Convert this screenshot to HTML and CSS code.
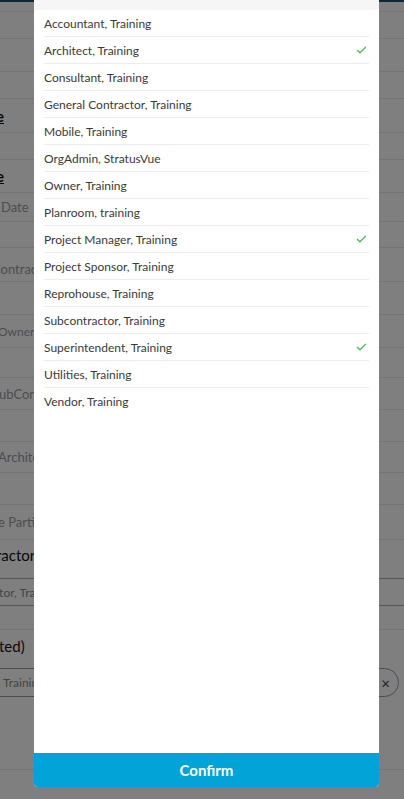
FILE: index.html
```html
<!DOCTYPE html>
<html lang="en">
<head>
<meta charset="utf-8">
<title>Select Participants</title>
<link rel="stylesheet" href="styles.css">
</head>
<body>
<div class="page">
  <div class="topbar"></div>
  <div class="r"></div>
  <div class="r"></div>
  <div class="r"></div>
  <div class="r"></div>
  <div class="r"><div class="cell"><span class="head">e</span></div></div>
  <div class="r"></div>
  <div class="r"><div class="cell"><span class="head">e</span></div></div>
  <div class="r"><div class="cell"><span class="lbl l-date">Date</span></div></div>
  <div class="r"></div>
  <div class="r low"><div class="cell"><span class="lbl l-con">Contractor</span></div></div>
  <div class="r"></div>
  <div class="r"><div class="cell"><span class="lbl l-own">(Owner)</span></div></div>
  <div class="r"></div>
  <div class="r"><div class="cell"><span class="lbl l-sub">SubContractor</span></div></div>
  <div class="r"></div>
  <div class="r"><div class="cell"><span class="lbl l-arc">Architect</span></div></div>
  <div class="r"></div>
  <div class="r"><div class="cell"><span class="lbl l-par">e Parties</span></div></div>
  <div class="r nb"><div class="cell"><span class="strong l-rac">Contractor</span></div></div>
  <div class="r nb"></div>
  <div class="r box"><div class="cell"><span class="small l-ctor">Subcontractor, Training</span></div></div>
  <div class="r"></div>
  <div class="r nb"><div class="cell"><span class="strong l-ted">ted)</span></div></div>
  <div class="r nb"></div>
  <div class="r nb"><div class="chip"><div class="cell"><span class="small l-tr">Training</span></div><span class="x">×</span></div></div>
  <div class="r"></div>
  <div class="r nb"></div>
</div>
<div class="overlay"></div>
<div class="modal">
  <div class="mhead"></div>
  <ul class="list">
    <li class="item">Accountant, Training</li>
    <li class="item">Architect, Training<svg class="check" viewBox="0 0 12 9"><path d="M1 4.6 L4.2 7.6 L11 1"/></svg></li>
    <li class="item">Consultant, Training</li>
    <li class="item">General Contractor, Training</li>
    <li class="item">Mobile, Training</li>
    <li class="item">OrgAdmin, StratusVue</li>
    <li class="item">Owner, Training</li>
    <li class="item">Planroom, training</li>
    <li class="item">Project Manager, Training<svg class="check" viewBox="0 0 12 9"><path d="M1 4.6 L4.2 7.6 L11 1"/></svg></li>
    <li class="item">Project Sponsor, Training</li>
    <li class="item">Reprohouse, Training</li>
    <li class="item">Subcontractor, Training</li>
    <li class="item">Superintendent, Training<svg class="check" viewBox="0 0 12 9"><path d="M1 4.6 L4.2 7.6 L11 1"/></svg></li>
    <li class="item">Utilities, Training</li>
    <li class="item">Vendor, Training</li>
  </ul>
  <button class="confirm">Confirm</button>
</div>
</body>
</html>
```

FILE: styles.css
```css
html, body {
  margin: 0;
  padding: 0;
}
body {
  width: 404px;
  height: 799px;
  overflow: hidden;
  position: relative;
  background: #fff;
  font-family: Lato, "Noto Sans", sans-serif;
}
.page {
  display: grid;
  grid-template-rows: 2px 10px 27px 33px 27px 34px 27px 33px 29px 26px 34px 33px 33px 30px 32px 32px 31px 32px 35px 30px 8px 28px 24px 32px 6px 29px 73px 29px;
  height: 799px;
}
.topbar {
  background: #1e4e6a;
}
.r {
  box-sizing: border-box;
  border-bottom: 1px solid #e9e9ee;
  display: flex;
  align-items: center;
  white-space: nowrap;
  font-size: 13px;
  color: #9a9a9a;
}
.r.nb {
  border-bottom: none;
}
.r.low {
  padding-top: 8px;
}
.r.box {
  border-top: 1px solid #aaa;
  border-bottom: 1px solid #aaa;
}
.cell {
  flex: none;
  width: 34px;
  overflow: hidden;
  display: flex;
  align-items: center;
}
.head {
  font-size: 15px;
  font-weight: 700;
  color: #111;
  text-decoration: underline;
  margin-left: -4px;
}
.lbl {
  color: #9a9a9a;
}
.l-date { margin-left: 1px; }
.l-con { margin-left: -8px; }
.l-own { margin-left: -5px; font-size: 12px; }
.l-sub { margin-left: -8px; }
.l-arc { margin-left: -2px; }
.l-par { margin-left: -2px; }
.strong {
  font-size: 15px;
  color: #111;
}
.l-rac { margin-left: -36px; }
.l-ted { margin-left: -1px; }
.small {
  font-size: 12px;
  color: #8a8a8a;
}
.l-ctor { margin-left: -60px; }
.l-tr { margin-left: 22px; }
.chip {
  box-sizing: border-box;
  height: 29px;
  margin-left: -20px;
  width: 419px;
  border: 1px solid #999;
  border-radius: 15px;
  display: flex;
  align-items: center;
  justify-content: space-between;
  padding: 0 8px 0 0;
}
.chip .cell {
  width: 54px;
}
.x {
  font-size: 15px;
  color: #444;
}
.overlay {
  position: absolute;
  inset: 0;
  background: rgba(0, 0, 0, 0.5);
}
.modal {
  position: absolute;
  left: 34px;
  top: 0;
  width: 345px;
  height: 787px;
  background: #fff;
  display: flex;
  flex-direction: column;
  border-radius: 0 0 4px 4px;
  overflow: hidden;
}
.mhead {
  flex: none;
  height: 10px;
  background: #f6f6f6;
}
.list {
  flex: 1;
  list-style: none;
  margin: 0;
  padding: 0 10px;
}
.item {
  box-sizing: border-box;
  height: 27px;
  border-bottom: 1px solid #ececec;
  display: flex;
  align-items: center;
  justify-content: space-between;
  padding-right: 2px;
  font-size: 12px;
  color: #3a3a3a;
}
.item:last-child {
  border-bottom: none;
}
.check {
  width: 11px;
  height: 8px;
  fill: none;
  stroke: #4cb95a;
  stroke-width: 1.5;
}
.confirm {
  flex: none;
  height: 34px;
  border: none;
  margin: 0;
  padding: 0;
  background: #02a4d8;
  color: #fff;
  font-family: Lato, "Noto Sans", sans-serif;
  font-weight: 700;
  font-size: 15px;
  display: flex;
  align-items: center;
  justify-content: center;
}
```
